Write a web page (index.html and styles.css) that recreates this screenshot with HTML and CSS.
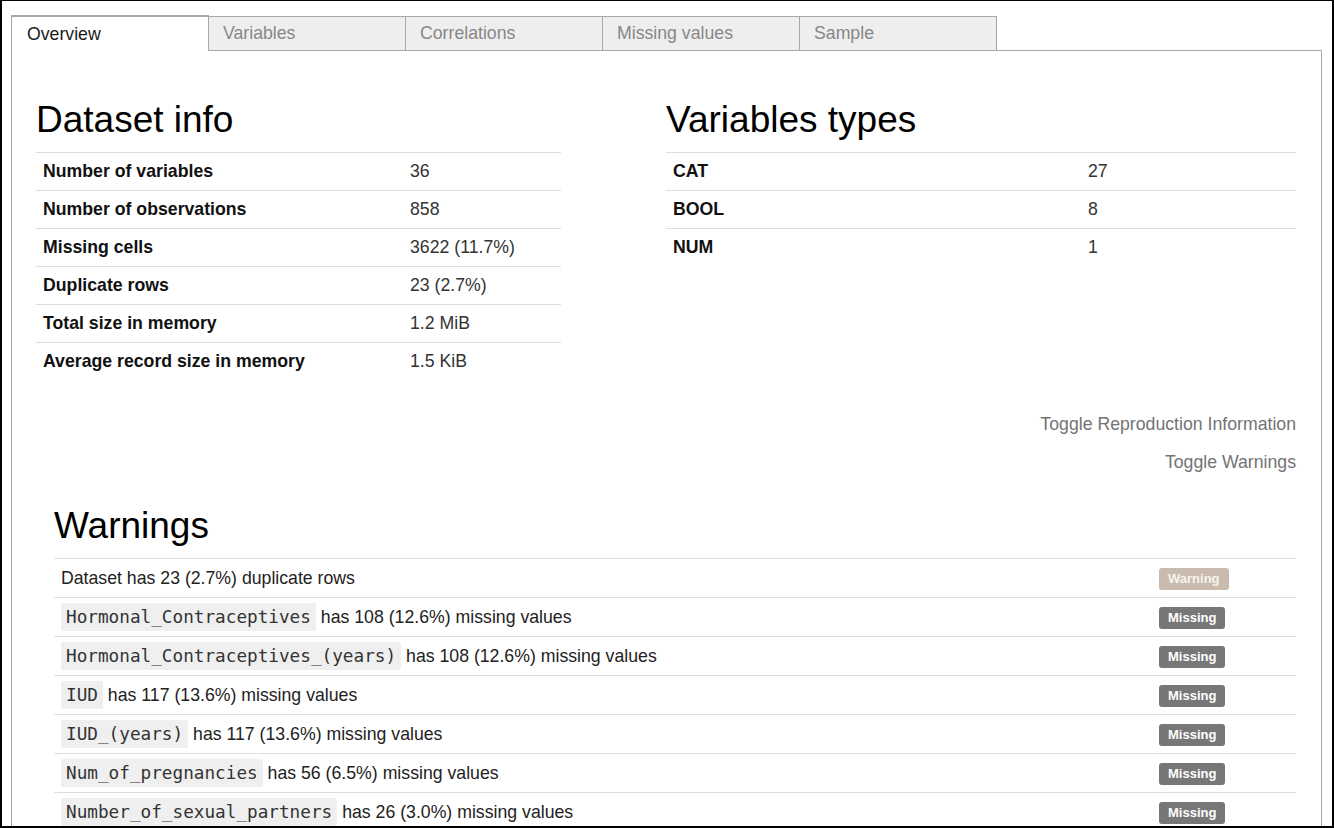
FILE: index.html
```html
<!DOCTYPE html>
<html lang="en">
<head>
<meta charset="utf-8">
<title>Overview</title>
<link rel="stylesheet" href="styles.css">
</head>
<body>
<div class="frame">
  <ul class="tabs">
    <li class="tab active">Overview</li>
    <li class="tab">Variables</li>
    <li class="tab">Correlations</li>
    <li class="tab">Missing values</li>
    <li class="tab">Sample</li>
  </ul>
  <div class="panel">
    <div class="overview-row">
      <section class="col">
        <h1 class="heading">Dataset info</h1>
        <table class="info-table info-left">
          <tr><th>Number of variables</th><td>36</td></tr>
          <tr><th>Number of observations</th><td>858</td></tr>
          <tr><th>Missing cells</th><td>3622 (11.7%)</td></tr>
          <tr><th>Duplicate rows</th><td>23 (2.7%)</td></tr>
          <tr><th>Total size in memory</th><td>1.2 MiB</td></tr>
          <tr><th>Average record size in memory</th><td>1.5 KiB</td></tr>
        </table>
      </section>
      <section class="col">
        <h1 class="heading">Variables types</h1>
        <table class="info-table info-right">
          <tr><th>CAT</th><td>27</td></tr>
          <tr><th>BOOL</th><td>8</td></tr>
          <tr><th>NUM</th><td>1</td></tr>
        </table>
      </section>
    </div>
    <div class="toggles">
      <a class="toggle">Toggle Reproduction Information</a>
      <a class="toggle">Toggle Warnings</a>
    </div>
    <section class="warnings">
      <h1 class="heading">Warnings</h1>
      <table class="warn-table">
        <tr><td>Dataset has 23 (2.7%) duplicate rows</td><td class="badge-cell"><span class="badge badge-warning">Warning</span></td></tr>
        <tr><td><code>Hormonal_Contraceptives</code> has 108 (12.6%) missing values</td><td class="badge-cell"><span class="badge">Missing</span></td></tr>
        <tr><td><code>Hormonal_Contraceptives_(years)</code> has 108 (12.6%) missing values</td><td class="badge-cell"><span class="badge">Missing</span></td></tr>
        <tr><td><code>IUD</code> has 117 (13.6%) missing values</td><td class="badge-cell"><span class="badge">Missing</span></td></tr>
        <tr><td><code>IUD_(years)</code> has 117 (13.6%) missing values</td><td class="badge-cell"><span class="badge">Missing</span></td></tr>
        <tr><td><code>Num_of_pregnancies</code> has 56 (6.5%) missing values</td><td class="badge-cell"><span class="badge">Missing</span></td></tr>
        <tr><td><code>Number_of_sexual_partners</code> has 26 (3.0%) missing values</td><td class="badge-cell"><span class="badge">Missing</span></td></tr>
      </table>
    </section>
  </div>
</div>
</body>
</html>
```

FILE: styles.css
```css
* { box-sizing: border-box; }

html, body {
  margin: 0;
  padding: 0;
  background: #fff;
}

body {
  font-family: "Liberation Sans", Arial, sans-serif;
  font-size: 17.7px;
  color: #222;
}

.frame {
  width: 1334px;
  height: 828px;
  overflow: hidden;
  border: 2px solid #000;
  border-top-width: 1px;
  padding-top: 14px;
}

.tabs {
  list-style: none;
  margin: 0 0 0 9px;
  padding: 0;
  display: flex;
  align-items: flex-end;
}

.tab {
  width: 198px;
  margin-left: -1px;
  padding-left: 14px;
  border: 1px solid #a3a8ae;
  background: #efeeee;
  color: #878787;
  line-height: 33px;
  white-space: nowrap;
}

.tab.active {
  margin-left: 0;
  padding-left: 15px;
  border-top-width: 2px;
  border-bottom: none;
  background: #fff;
  color: #1a1a1a;
  line-height: 34px;
  position: relative;
  z-index: 1;
}

.panel {
  margin: -1px 10px 0 9px;
  border: 1px solid #a3a8ae;
  padding: 0 25px 40px 24px;
}

.overview-row {
  display: grid;
  grid-template-columns: 630px 630px;
}

.heading {
  font-size: 37px;
  font-weight: normal;
  line-height: 40px;
  margin: 49px 0 12px;
  color: #000;
}

.info-table {
  border-collapse: separate;
  border-spacing: 0;
}

.info-table th,
.info-table td {
  border-top: 1px solid #ddd;
  line-height: 37px;
  padding: 0 7px;
  text-align: left;
  vertical-align: middle;
  white-space: nowrap;
}

.info-table th {
  font-weight: bold;
  color: #111;
}

.info-table td {
  color: #333;
}

.info-left { width: 525px; }
.info-left th { width: 367px; }

.info-right { width: 630px; }
.info-right th { width: 415px; }

.toggles {
  margin-top: 25px;
  display: flex;
  flex-direction: column;
  align-items: flex-end;
}

.toggle {
  line-height: 38px;
  color: #737373;
  text-decoration: none;
  cursor: pointer;
}

.warnings {
  margin-left: 18px;
}

.warnings .heading {
  margin-top: 25px;
}

.warn-table {
  width: 100%;
  border-collapse: separate;
  border-spacing: 0;
}

.warn-table td {
  box-sizing: border-box;
  height: 39px;
  border-top: 1px solid #ddd;
  line-height: 20px;
  padding: 0 7px;
  vertical-align: middle;
  white-space: nowrap;
  color: #222;
}

.warn-table .badge-cell {
  width: 144px;
  padding-top: 2px;
}

code {
  font-family: "DejaVu Sans Mono", "Liberation Mono", monospace;
  font-size: 17.7px;
  line-height: 20px;
  background: #efefef;
  color: #333;
  padding: 4px 5px;
  border-radius: 2px;
}

.badge {
  display: inline-block;
  vertical-align: middle;
  font-size: 13px;
  font-weight: bold;
  line-height: 22px;
  padding: 0 9px;
  border-radius: 3px;
  background: #777;
  color: #fff;
}

.badge-warning {
  background: #c9bcae;
  color: #f7f3ef;
}
```
